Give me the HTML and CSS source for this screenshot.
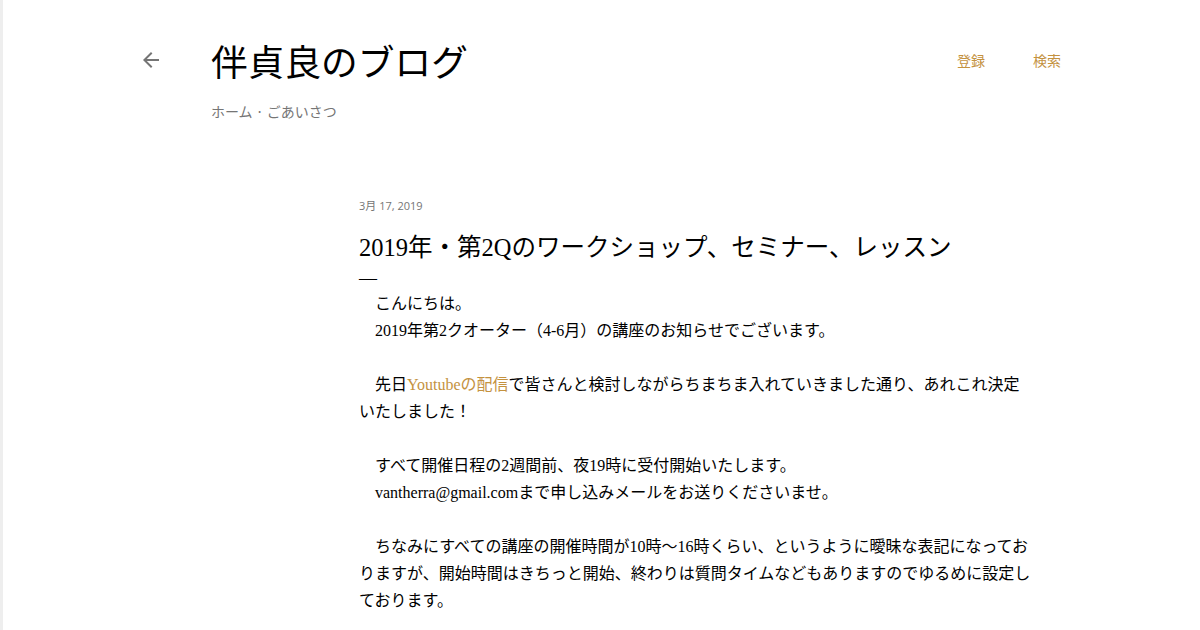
FILE: index.html
```html
<!DOCTYPE html>
<html lang="ja">
<head>
    <meta charset="UTF-8">
    <meta name="viewport" content="width=device-width, initial-scale=1.0">
    <title>伴貞良のブログ: 2019年・第2Qのワークショップ、セミナー、レッスン</title>
    <link rel="stylesheet" href="styles.css">
</head>
<body>

<div class="page">
    <!-- Header blog -->
    <header class="masthead">
        <a class="back" href="#" aria-label="戻る">
            <svg viewBox="0 0 24 24" width="24" height="24">
                <path d="M20 11H7.83l5.59-5.59L12 4l-8 8 8 8 1.41-1.41L7.83 13H20v-2z" fill="#757575"/>
            </svg>
        </a>
        <div class="brand">
            <h1 class="blog-title">伴貞良のブログ</h1>
            <nav class="crumbs">ホーム · ごあいさつ</nav>
        </div>
        <nav class="links">
            <a href="#">登録</a>
            <a href="#">検索</a>
        </nav>
    </header>

    <!-- Isi post -->
    <main class="content">
        <article class="post">
            <div class="post-date">3月 17, 2019</div>
            <h3 class="post-title">2019年・第2Qのワークショップ、セミナー、レッスン</h3>
            <div class="post-dash">—</div>
            <div class="post-body">
                <p>　こんにちは。<br>　2019年第2クオーター（4-6月）の講座のお知らせでございます。</p>
                <p>　先日<a href="#">Youtubeの配信</a>で皆さんと検討しながらちまちま入れていきました通り、あれこれ決定いたしました！</p>
                <p>　すべて開催日程の2週間前、夜19時に受付開始いたします。<br>　vantherra@gmail.comまで申し込みメールをお送りくださいませ。</p>
                <p>　ちなみにすべての講座の開催時間が10時～16時くらい、というように曖昧な表記になっておりますが、開始時間はきちっと開始、終わりは質問タイムなどもありますのでゆるめに設定しております。</p>
            </div>
        </article>
    </main>
</div>

</body>
</html>
```

FILE: styles.css
```css
/* Dasar halaman */
body {
    margin: 0;
    background-color: #fff;
    color: #212121;
    font-family: "Liberation Serif", "Noto Sans CJK JP", serif;
}

.page {
    min-height: 630px;
    border-left: 3px solid #eeeeee;
    box-sizing: border-box;
}

a {
    text-decoration: none;
    color: #c4923f;
}

/* Header */
.masthead {
    display: flex;
    align-items: flex-start;
    padding: 38px 139px 0 136px;
}

.back {
    display: flex;
    align-items: center;
    height: 44px;
    margin-right: 48px;
}

.back svg {
    display: block;
}

.brand {
    flex: 1;
}

.blog-title {
    margin: 0;
    font-family: "Noto Sans CJK JP", sans-serif;
    font-weight: 400;
    font-size: 36.7px;
    line-height: 44px;
    color: #000;
}

.crumbs {
    margin-top: 19px;
    font-family: "Noto Sans CJK JP", sans-serif;
    font-size: 14px;
    line-height: 20px;
    color: #757575;
}

.links {
    display: flex;
    gap: 48px;
    height: 44px;
    align-items: center;
}

.links a {
    font-family: "Noto Sans CJK JP", sans-serif;
    font-size: 14px;
    color: #c4923f;
}

/* Post */
.content {
    padding: 77px 0 0 356px;
}

.post {
    width: 676px;
}

.post-date {
    font-family: "Open Sans", "Noto Sans CJK JP", sans-serif;
    font-size: 11px;
    line-height: 16px;
    color: #757575;
}

.post-title {
    margin: 19px 0 0;
    font-family: "Liberation Serif", "Noto Sans CJK JP", serif;
    font-weight: 400;
    font-size: 24.5px;
    line-height: 30px;
    color: #000;
}

.post-dash {
    margin-top: 5px;
    font-size: 18px;
    line-height: 20px;
    color: #000;
}

.post-body {
    margin-top: 2px;
    font-size: 16px;
    line-height: 27px;
    color: #000;
}

.post-body p {
    margin: 0 0 27px;
}
```
